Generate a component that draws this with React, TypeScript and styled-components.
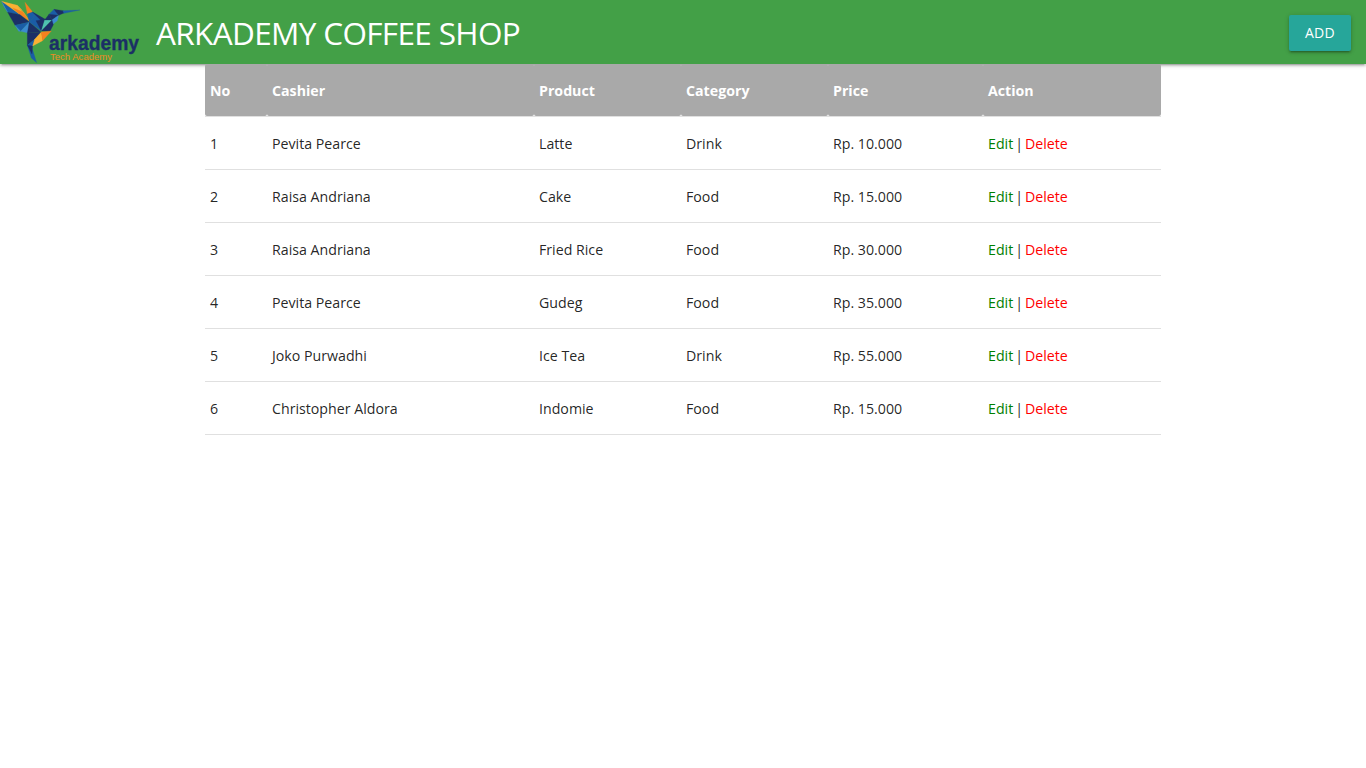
import React from "react";
import styled, { createGlobalStyle } from "styled-components";

const GlobalStyle = createGlobalStyle`
  *, *::before, *::after { box-sizing: border-box; }
  body {
    margin: 0;
    background: #fff;
    color: rgba(0, 0, 0, 0.87);
    font-family: "Segoe UI", "Open Sans", "Noto Sans", sans-serif;
    font-size: 14.2px;
    line-height: 22px;
  }
`;

const NavBar = styled.nav`
  position: relative;
  display: flex;
  align-items: center;
  height: 64px;
  padding-right: 15px;
  background: #43a047;
  box-shadow: 0 2px 2px 0 rgba(0, 0, 0, 0.14), 0 3px 1px -2px rgba(0, 0, 0, 0.12),
    0 1px 5px 0 rgba(0, 0, 0, 0.2);
`;

const Logo = styled.svg`
  flex: none;
  width: 142px;
  height: 64px;
`;

const Title = styled.h1`
  margin: 0 auto 0 14px;
  padding-top: 2px;
  color: #fff;
  font-size: 31.5px;
  font-weight: 400;
  line-height: 62px;
  letter-spacing: -0.65px;
  white-space: nowrap;
`;

const AddButton = styled.button`
  width: 62px;
  height: 36px;
  margin-top: 2px;
  padding: 0;
  border: 0;
  border-radius: 2px;
  background: #26a69a;
  color: #fff;
  font: 400 14px/36px "Segoe UI", "Open Sans", sans-serif;
  letter-spacing: 0.3px;
  box-shadow: 0 2px 2px 0 rgba(0, 0, 0, 0.14), 0 3px 1px -2px rgba(0, 0, 0, 0.12),
    0 1px 5px 0 rgba(0, 0, 0, 0.2);
`;

const Table = styled.table`
  position: relative;
  width: 956px;
  margin: 0 auto;
  border-collapse: collapse;
  table-layout: fixed;
`;

const Row = styled.tr<{ $height?: number }>`
  height: ${(p) => p.$height ?? 53}px;
  border-bottom: 1px solid rgba(0, 0, 0, 0.12);
`;

const HeadCell = styled.th<{ $width: number }>`
  width: ${(p) => p.$width}px;
  padding: 3px 5px 0;
  border-radius: 2px;
  background: #a9a9a9;
  color: #fff;
  font-weight: 700;
  text-align: left;
`;

const Cell = styled.td`
  padding: 2px 5px 0;
  white-space: nowrap;
`;

const ActionCell = styled(Cell)`
  word-spacing: -1.7px;
`;

const ActionLink = styled.a<{ $color: string }>`
  color: ${(p) => p.$color};
  text-decoration: none;
`;

const columns = [
  { label: "No", width: 62 },
  { label: "Cashier", width: 267 },
  { label: "Product", width: 147 },
  { label: "Category", width: 147 },
  { label: "Price", width: 155 },
  { label: "Action", width: 178 },
];

const orders = [
  ["Pevita Pearce", "Latte", "Drink", "Rp. 10.000"],
  ["Raisa Andriana", "Cake", "Food", "Rp. 15.000"],
  ["Raisa Andriana", "Fried Rice", "Food", "Rp. 30.000"],
  ["Pevita Pearce", "Gudeg", "Food", "Rp. 35.000"],
  ["Joko Purwadhi", "Ice Tea", "Drink", "Rp. 55.000"],
  ["Christopher Aldora", "Indomie", "Food", "Rp. 15.000"],
];

const navy = "#1b2f66";
const blue = "#1a5da6";
const sky = "#3b8bd0";
const teal = "#4fc3b0";
const orange = "#f5811f";
const yellow = "#fbb034";

/* Hummingbird facets, in units of a third of a pixel */
const facets: [string, string][] = [
  ["5,4 23,37 60,44", blue],
  ["5,4 23,37 12,20", sky],
  ["5,4 52,16 68,36 58,42", yellow],
  ["38,24 70,36 90,65 60,44", orange],
  ["52,16 70,36 90,65 64,28", yellow],
  ["23,37 60,44 88,66 45,76", navy],
  ["45,76 88,66 62,94", blue],
  ["62,94 45,76 56,94", sky],
  ["62,94 88,66 84,99", sky],
  ["88,66 122,95 82,99", navy],
  ["75,7 98,36 82,42", orange],
  ["82,42 98,36 108,42 88,66", blue],
  ["108,42 128,55 124,93 88,66", blue],
  ["97,36 136,58 124,62", navy],
  ["108,62 136,58 124,93", navy],
  ["134,60 156,60 124,93", teal],
  ["134,60 147,43 156,60", navy],
  ["147,43 162,28 176,38 170,48", blue],
  ["147,43 176,46 156,60", navy],
  ["156,60 176,46 172,62 155,76", sky],
  ["156,60 160,74 150,94 124,93", navy],
  ["162,28 190,32 194,38 176,46 168,36", navy],
  ["188,32 240,30 192,40", blue],
  ["82,99 124,96 104,118 82,136", navy],
  ["82,136 104,118 98,138 88,144", blue],
  ["82,136 98,150 110,188 94,174", blue],
  ["82,136 98,138 96,162", navy],
  ["124,96 128,122 98,138 104,118", yellow],
  ["124,96 154,93 128,122", orange],
];

export default function App() {
  return (
    <>
      <GlobalStyle />
      <NavBar>
        <Logo viewBox="0 0 142 64">
          <g transform="scale(0.3333)">
            {facets.map(([points, fill]) => (
              <polygon key={points} points={points} fill={fill} stroke={fill} strokeWidth="0.8" />
            ))}
          </g>
          <text x="49" y="49.5" fontFamily="Liberation Sans" fontWeight="700" fontSize="20" textLength="90" lengthAdjust="spacingAndGlyphs" fill={navy} stroke={navy} strokeWidth="0.3">arkademy</text>
          <text x="50" y="60" fontFamily="Liberation Sans" fontSize="9.8" textLength="62" lengthAdjust="spacingAndGlyphs" fill="#f08a24">Tech Academy</text>
        </Logo>
        <Title>ARKADEMY COFFEE SHOP</Title>
        <AddButton>ADD</AddButton>
      </NavBar>
      <Table>
        <thead>
          <Row $height={52}>
            {columns.map((c) => (
              <HeadCell key={c.label} $width={c.width}>{c.label}</HeadCell>
            ))}
          </Row>
        </thead>
        <tbody>
          {orders.map((order, i) => (
            <Row key={i}>
              <Cell>{i + 1}</Cell>
              {order.map((value, j) => (
                <Cell key={j}>{value}</Cell>
              ))}
              <ActionCell>
                <ActionLink $color="green">Edit</ActionLink> | <ActionLink $color="red">Delete</ActionLink>
              </ActionCell>
            </Row>
          ))}
        </tbody>
      </Table>
    </>
  );
}
